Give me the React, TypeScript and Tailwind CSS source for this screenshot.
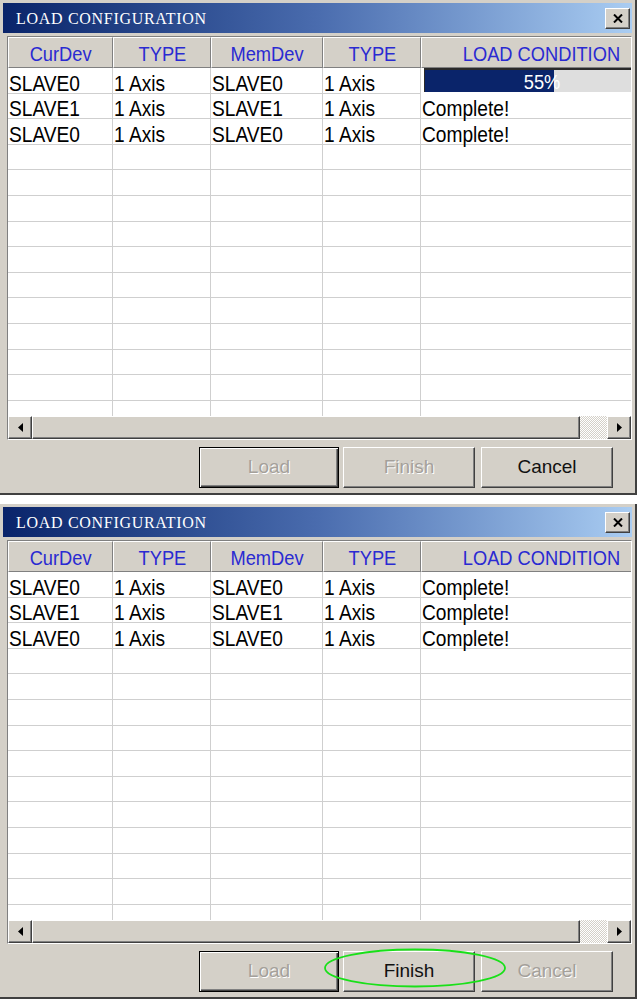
import React from "react";

type Row = [string, string, string, string, string | number];

const WIDTHS = ["w-[105px]", "w-[98px]", "w-[112px]", "w-[98px]", "w-[240px]"];
const HEADERS = ["CurDev", "TYPE", "MemDev", "TYPE", "LOAD CONDITION"];
const ROW_COUNT = 14;

const LOADING: Row[] = [
  ["SLAVE0", "1 Axis", "SLAVE0", "1 Axis", 55],
  ["SLAVE1", "1 Axis", "SLAVE1", "1 Axis", "Complete!"],
  ["SLAVE0", "1 Axis", "SLAVE0", "1 Axis", "Complete!"],
];

const DONE: Row[] = [
  ["SLAVE0", "1 Axis", "SLAVE0", "1 Axis", "Complete!"],
  ["SLAVE1", "1 Axis", "SLAVE1", "1 Axis", "Complete!"],
  ["SLAVE0", "1 Axis", "SLAVE0", "1 Axis", "Complete!"],
];

const raised =
  "border-t border-l border-t-white border-l-white border-r border-b border-r-[#404040] border-b-[#404040] shadow-[inset_-1px_-1px_0_#808080]";

function Triangle({ dir }: { dir: "left" | "right" }) {
  return (
    <svg width="5" height="9" viewBox="0 0 5 9">
      <polygon points={dir === "left" ? "5,0 0,4.5 5,9" : "0,0 5,4.5 0,9"} fill="#000" />
    </svg>
  );
}

function Progress({ value }: { value: number }) {
  return (
    <div className="relative h-full border-t-2 border-l border-[#2a2a2a] bg-[#dedede]">
      <div className="h-full bg-[#0a246a]" style={{ width: `${value}%` }} />
      <span className="absolute inset-0 flex items-center justify-center pt-[2px] text-white">
        <span className="inline-block scale-x-[0.87] text-[21px] leading-none">{value}%</span>
      </span>
    </div>
  );
}

function Button({
  label,
  enabled,
  isDefault,
  width,
}: {
  label: string;
  enabled: boolean;
  isDefault?: boolean;
  width: string;
}) {
  return (
    <div
      className={`${width} h-[41px] flex items-center justify-center bg-[#d4d0c8] text-[19px] ${
        isDefault
          ? "border border-black shadow-[inset_1px_1px_0_#fff,inset_-1px_-1px_0_#404040,inset_-2px_-2px_0_#808080]"
          : raised
      } ${enabled ? "text-[#111]" : "text-[#a4a09a] [text-shadow:1px_1px_0_#fff]"}`}
    >
      {label}
    </div>
  );
}

function Window({
  rows,
  finishEnabled,
  cancelEnabled,
  circled,
  className,
}: {
  rows: Row[];
  finishEnabled: boolean;
  cancelEnabled: boolean;
  circled?: boolean;
  className?: string;
}) {
  return (
    <div
      className={`relative w-[637px] h-[495px] flex flex-col bg-[#d4d0c8] pt-[3px] pl-[3px] pr-[3px] border-r-2 border-b-2 border-[#404040] ${className ?? ""}`}
    >
      {/* title bar */}
      <div className="h-[30px] shrink-0 flex items-center justify-between bg-linear-to-r from-[#0a246a] via-[#4a6cae] to-[#aacdf2] pl-[13px] pr-[2px]">
        <span className="font-['Liberation_Serif',serif] text-[16px] tracking-[0.7px] text-white pt-[1px]">
          LOAD CONFIGURATION
        </span>
        <div className={`w-[25px] h-[21px] flex items-center justify-center bg-[#d4d0c8] ${raised}`}>
          <svg width="10" height="9" viewBox="0 0 10 9">
            <path d="M1 0.5 L9 8.5 M9 0.5 L1 8.5" stroke="#000" strokeWidth="2" />
          </svg>
        </div>
      </div>

      {/* grid */}
      <div className="mt-[3px] ml-[4px] h-[404px] shrink-0 flex flex-col border border-t-[#808080] border-l-[#808080] border-r-white border-b-white bg-white overflow-hidden">
        <div className="h-[31px] shrink-0 flex bg-[#d4d0c8]">
          {HEADERS.map((h, i) => (
            <div
              key={i}
              className={`${WIDTHS[i]} shrink-0 h-full flex items-center justify-center pt-[2px] text-[#2a2ad2] border-t border-l border-t-white border-l-white border-r border-b border-r-[#808080] border-b-[#808080] whitespace-nowrap`}
            >
              <span className="inline-block scale-x-[0.87] text-[21px] leading-none">{h}</span>
            </div>
          ))}
        </div>
        <div className="flex-1 overflow-hidden">
          {Array.from({ length: ROW_COUNT }).map((_, r) => {
            const row = rows[r];
            return (
              <div key={r} className="h-[25.6px] flex">
                {WIDTHS.map((w, c) => {
                  const v = row ? row[c] : "";
                  if (typeof v === "number") {
                    return (
                      <div key={c} className={`${w} shrink-0 h-full pl-[3px] pr-[1px] pb-[2px]`}>
                        <Progress value={v} />
                      </div>
                    );
                  }
                  return (
                    <div
                      key={c}
                      className={`${w} shrink-0 h-full flex items-end pl-[1px] text-black whitespace-nowrap border-b border-r border-[#cfcfcf]`}
                    >
                      <span className="inline-block origin-left scale-x-[0.87] text-[22px] leading-[19px]">
                        {v}
                      </span>
                    </div>
                  );
                })}
              </div>
            );
          })}
        </div>
        {/* horizontal scrollbar */}
        <div className="h-[23px] shrink-0 flex bg-[#d4d0c8]">
          <div className={`w-[24px] h-full flex items-center justify-center ${raised}`}>
            <Triangle dir="left" />
          </div>
          <div className={`flex-1 h-full ${raised}`} />
          <div className="w-[27px] h-full bg-[repeating-conic-gradient(#d4d0c8_0_25%,#ffffff_0_50%)] bg-[length:2px_2px]" />
          <div className={`w-[24px] h-full flex items-center justify-center ${raised}`}>
            <Triangle dir="right" />
          </div>
        </div>
      </div>

      {/* buttons */}
      <div className="mt-[7px] flex justify-end pr-[19px]">
        <Button label="Load" enabled={false} isDefault width="w-[140px]" />
        <div className="w-[4px]" />
        <Button label="Finish" enabled={finishEnabled} width="w-[132px]" />
        <div className="w-[6px]" />
        <Button label="Cancel" enabled={cancelEnabled} width="w-[132px]" />
      </div>

      {circled && (
        <svg className="absolute left-[323px] top-[444px]" width="184" height="40" viewBox="0 0 184 40">
          <ellipse cx="92" cy="20" rx="90" ry="18.5" fill="none" stroke="#19e019" strokeWidth="1.8" />
        </svg>
      )}
    </div>
  );
}

export default function App() {
  return (
    <div className="w-[637px] h-[1001px] bg-white font-['Liberation_Sans',Arial,sans-serif] overflow-hidden">
      <Window rows={LOADING} finishEnabled={false} cancelEnabled />
      <Window rows={DONE} finishEnabled cancelEnabled={false} circled className="mt-[9px]" />
    </div>
  );
}
